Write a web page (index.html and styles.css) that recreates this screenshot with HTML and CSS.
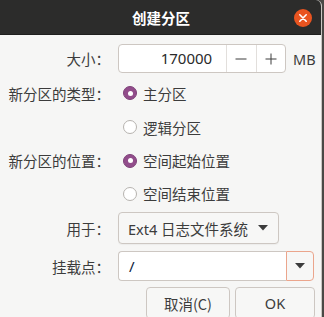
FILE: index.html
```html
<!DOCTYPE html>
<html lang="zh">
<head>
<meta charset="utf-8">
<title>创建分区</title>
<link rel="stylesheet" href="styles.css">
</head>
<body>
<div class="dialog">
  <div class="titlebar">
    <span class="title">创建分区</span>
    <span class="close">
      <svg width="18" height="18" viewBox="0 0 18 18"><circle cx="9" cy="9" r="9" fill="#e95420"/><path d="M5.8 5.8 L12.2 12.2 M12.2 5.8 L5.8 12.2" stroke="#fff" stroke-width="1.6" stroke-linecap="round"/></svg>
    </span>
  </div>
  <div class="content">
    <div class="row r1">
      <div class="label">大小：</div>
      <div class="field">
        <div class="spin">
          <div class="spin-value">170000</div>
          <div class="spin-btn">
            <svg width="12" height="12" viewBox="0 0 12 12"><path d="M0.5 6 H11.5" stroke="#3c3c3c" stroke-width="1"/></svg>
          </div>
          <div class="spin-btn">
            <svg width="12" height="12" viewBox="0 0 12 12"><path d="M0.5 6 H11.5 M6 0.5 V11.5" stroke="#3c3c3c" stroke-width="1"/></svg>
          </div>
        </div>
        <span class="unit">MB</span>
      </div>
    </div>
    <div class="row r2">
      <div class="label">新分区的类型：</div>
      <div class="field"><span class="radio on"></span><span class="rtext">主分区</span></div>
    </div>
    <div class="row r3">
      <div class="label"></div>
      <div class="field"><span class="radio"></span><span class="rtext">逻辑分区</span></div>
    </div>
    <div class="row r4">
      <div class="label">新分区的位置：</div>
      <div class="field"><span class="radio on"></span><span class="rtext">空间起始位置</span></div>
    </div>
    <div class="row r5">
      <div class="label"></div>
      <div class="field"><span class="radio"></span><span class="rtext">空间结束位置</span></div>
    </div>
    <div class="row r6">
      <div class="label">用于：</div>
      <div class="field">
        <div class="combo">
          <span class="combo-text">Ext4 日志文件系统</span>
          <svg class="arrow" width="10" height="6" viewBox="0 0 10 6"><path d="M0 0 H10 L5 5.5 Z" fill="#3c3c3c"/></svg>
        </div>
      </div>
    </div>
    <div class="row r7">
      <div class="label">挂载点：</div>
      <div class="field">
        <div class="entry-combo">
          <div class="entry-text">/</div>
          <div class="entry-btn">
            <svg width="10" height="6" viewBox="0 0 10 6"><path d="M0 0 H10 L5 5.5 Z" fill="#3c3c3c"/></svg>
          </div>
        </div>
      </div>
    </div>
    <div class="buttons">
      <div class="btn cancel">取消(C)</div>
      <div class="btn ok">OK</div>
    </div>
  </div>
</div>
</body>
</html>
```

FILE: styles.css
```css
html, body {
  margin: 0;
  padding: 0;
}
body {
  width: 324px;
  height: 317px;
  overflow: hidden;
  background: #4a4845;
  font-family: "Noto Sans", "Noto Sans CJK SC", sans-serif;
  color: #3c3c3c;
}
.dialog {
  width: 322px;
  height: 317px;
  background: #f6f6f5;
  border-top-right-radius: 6px;
  overflow: hidden;
  border-right: 1px solid #c9c6c2;
  box-sizing: border-box;
}
.titlebar {
  height: 35px;
  background: #2c2c2b;
  display: flex;
  align-items: center;
  justify-content: center;
  position: relative;
  border-bottom: 1px solid #1f1f1e;
  box-sizing: border-box;
}
.title {
  color: #ffffff;
  font-weight: bold;
  font-size: 14.5px;
  font-family: "Noto Sans CJK SC", sans-serif;
  margin-left: 1px;
}
.close {
  position: absolute;
  right: 9px;
  top: 9px;
  width: 18px;
  height: 18px;
  display: block;
}
.close svg { display: block; }
.content {
  display: flex;
  flex-direction: column;
  padding-top: 9px;
}
.row {
  display: flex;
  align-items: center;
  gap: 8px;
}
.label {
  width: 110px;
  text-align: right;
  font-size: 14.5px;
  font-family: "Noto Sans CJK SC", sans-serif;
  color: #3c3c3c;
  white-space: nowrap;
}
.field {
  display: flex;
  align-items: center;
}
.r1 { height: 29px; }
.r2 { height: 34px; margin-top: 3px; }
.r3 { height: 34px; }
.r4 { height: 33px; }
.r5 { height: 33px; }
.r6 { height: 32px; margin-top: 2px; }
.r7 { height: 30px; margin-top: 7px; }

.spin {
  display: flex;
  width: 168px;
  height: 29px;
  border: 1px solid #cdc7c2;
  border-radius: 4px;
  background: #ffffff;
  box-sizing: border-box;
}
.spin-value {
  width: 109px;
  box-sizing: border-box;
  padding-right: 14px;
  text-align: right;
  font-size: 15px;
  line-height: 27px;
  color: #2a2a2a;
}
.spin-btn {
  width: 29px;
  border-left: 1px solid #e2dfdc;
  display: flex;
  align-items: center;
  justify-content: center;
}
.spin-btn svg { display: block; }
.unit {
  margin-left: 7px;
  font-size: 14.5px;
  color: #3c3c3c;
}
.radio {
  width: 14px;
  height: 14px;
  border-radius: 50%;
  border: 1px solid #b6b3af;
  background: #ffffff;
  box-sizing: border-box;
  margin-left: 5px;
  margin-right: 6px;
  position: relative;
}
.radio.on {
  background: #924d8b;
  border-color: #7e4179;
}
.radio.on::after {
  content: "";
  position: absolute;
  left: 3.5px;
  top: 3.5px;
  width: 5px;
  height: 5px;
  border-radius: 50%;
  background: #ffffff;
}
.rtext {
  font-size: 14.5px;
  font-family: "Noto Sans CJK SC", sans-serif;
  color: #3c3c3c;
}
.combo {
  width: 161px;
  height: 32px;
  border: 1px solid #cdc7c2;
  border-radius: 4px;
  background: #f7f7f6;
  box-sizing: border-box;
  display: flex;
  align-items: center;
  padding-left: 9px;
  padding-right: 10px;
  justify-content: space-between;
  box-shadow: 0 1px 1px rgba(0,0,0,0.04);
}
.combo-text {
  font-size: 14.5px;
  color: #3c3c3c;
}
.arrow { display: block; }
.entry-combo {
  display: flex;
  width: 196px;
  height: 30px;
}
.entry-text {
  width: 168px;
  box-sizing: border-box;
  border: 1px solid #cdc7c2;
  border-right: none;
  border-radius: 4px 0 0 4px;
  background: #ffffff;
  padding-left: 10px;
  font-size: 15px;
  line-height: 28px;
  color: #0c1a3a;
}
.entry-btn {
  width: 28px;
  box-sizing: border-box;
  border: 1px solid #eba58c;
  border-radius: 0 4px 4px 0;
  background: #f7f7f6;
  display: flex;
  align-items: center;
  justify-content: center;
}
.entry-btn svg { display: block; }
.buttons {
  display: flex;
  justify-content: flex-end;
  gap: 5px;
  margin-top: 6px;
  padding-right: 6px;
}
.btn {
  height: 32px;
  border: 1px solid #cdc7c2;
  border-radius: 4px;
  background: #f7f7f6;
  box-sizing: border-box;
  display: flex;
  align-items: center;
  justify-content: center;
  font-size: 14.5px;
  color: #3c3c3c;
}
.cancel { width: 84px; font-family: "Noto Sans CJK SC", sans-serif; }
.ok { width: 80px; }
```
